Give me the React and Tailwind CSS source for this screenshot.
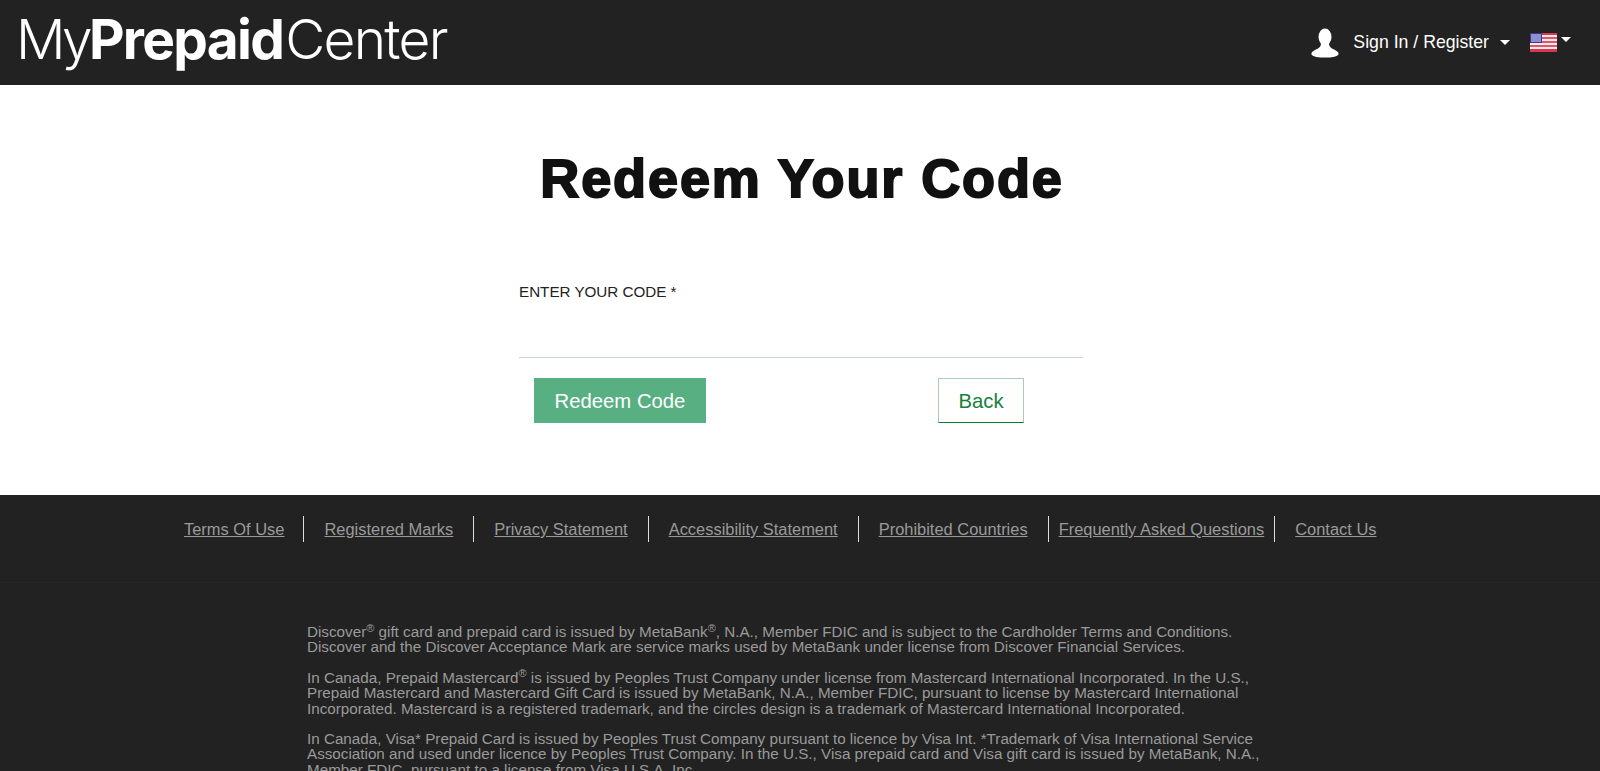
const LINKS = [
  { label: "Terms Of Use", cls: "pr-[19px] border-r" },
  { label: "Registered Marks", cls: "px-[20px] border-r" },
  { label: "Privacy Statement", cls: "px-[20px] border-r" },
  { label: "Accessibility Statement", cls: "px-[20px] border-r" },
  { label: "Prohibited Countries", cls: "px-[20px] border-r" },
  { label: "Frequently Asked Questions", cls: "px-[10px] border-r" },
  { label: "Contact Us", cls: "pl-[20px]" },
]

function UserIcon() {
  return (
    <svg width="28" height="30" viewBox="0 0 28 30" fill="#fff" className="blur-[0.4px]">
      <ellipse cx="14" cy="9" rx="6.5" ry="8.5" />
      <path d="M10 15 C10 19 8 20 4 22 C1 23.5 0 25 0.5 26.5 C2 29 8 29.5 14 29.5 C20 29.5 26 29 27.5 26.5 C28 25 27 23.5 24 22 C20 20 18 19 18 15 Z" />
    </svg>
  )
}

function FlagIcon() {
  return (
    <svg width="27" height="19" viewBox="0 0 27 19" className="block">
      <rect width="27" height="19" fill="#f0e8ec" />
      <rect y="0" width="27" height="2" fill="#d8394f" />
      <rect y="4" width="27" height="2" fill="#e2566a" />
      <rect y="8" width="27" height="2" fill="#e2566a" />
      <rect y="12" width="27" height="2" fill="#e2566a" />
      <rect y="16" width="27" height="3" fill="#d8394f" />
      <rect x="0.5" y="0.5" width="11" height="9" fill="#8f8fcf" stroke="#3c3b8e" strokeWidth="1" />
    </svg>
  )
}

function Caret() {
  return <span className="block w-0 h-0 border-x-[5.5px] border-x-transparent border-t-[5px] border-t-white" />
}

function Header() {
  return (
    <header className="h-[85px] bg-[#222222] flex items-center justify-between shrink-0">
      <div className="pl-[16px] pb-[6px] text-white text-[55px] leading-none tracking-[-1.7px] font-['Inter',sans-serif] font-light">
        <span className="tracking-[-3.7px]">My</span>
        <span className="font-bold">Prepaid</span>
        <span className="ml-[2px]">Center</span>
      </div>
      <div className="flex items-center pr-[29px] text-white text-[17.7px]">
        <UserIcon />
        <span className="ml-[14px]">Sign In / Register</span>
        <span className="ml-[11px] mb-[1px]"><Caret /></span>
        <span className="ml-[20px]"><FlagIcon /></span>
        <span className="ml-[4px] mb-[6px]"><Caret /></span>
      </div>
    </header>
  )
}

function RedeemForm() {
  return (
    <main className="h-[410px] bg-white flex flex-col items-center">
      <h1 className="mt-[62px] ml-[4px] text-[54px] leading-[62px] text-[#111111] font-bold tracking-[1.9px] [-webkit-text-stroke:2px_#111111]">
        Redeem Your Code
      </h1>
      <div className="w-[564px] ml-[2px] mt-[74px]">
        <label className="block text-[15.2px] leading-[17px] text-[#222222]">ENTER YOUR CODE *</label>
        <div className="h-[58px] border-b border-[#ced4da]" />
        <div className="flex mt-[20px] pl-[15px]">
          <button className="w-[172px] h-[45px] pt-[1px] bg-[#58b082] text-white text-[20.3px]">Redeem Code</button>
          <button className="ml-[232px] w-[86px] h-[45px] pt-[1px] bg-white border border-[#a9cdb4] border-b-[#0a7a2a] text-[#17803a] text-[20.3px]">
            Back
          </button>
        </div>
      </div>
    </main>
  )
}

function Footer() {
  return (
    <footer className="bg-[#222222] text-[#9a9a9a]">
      <div className="h-[88px] border-b border-[#262626] pt-[21px] pl-[184px]">
        <ul className="flex text-[16.45px] leading-[26px]">
          {LINKS.map((l) => (
            <li key={l.label} className={`border-[#dddddd] ${l.cls}`}>
              <a href="#" className="underline">{l.label}</a>
            </li>
          ))}
        </ul>
      </div>
      <div className="w-[960px] ml-[307px] pt-[41px] pb-[30px] text-[15.22px] leading-[15.4px] flex flex-col gap-[15px]">
        <p>
          Discover<sup className="text-[11px]">®</sup> gift card and prepaid card is issued by MetaBank<sup className="text-[11px]">®</sup>, N.A., Member FDIC and is subject to the Cardholder Terms and Conditions. Discover and the Discover Acceptance Mark are service marks used by MetaBank under license from Discover Financial Services.
        </p>
        <p>
          In Canada, Prepaid Mastercard<sup className="text-[11px]">®</sup> is issued by Peoples Trust Company under license from Mastercard International Incorporated. In the U.S., Prepaid Mastercard and Mastercard Gift Card is issued by MetaBank, N.A., Member FDIC, pursuant to license by Mastercard International Incorporated. Mastercard is a registered trademark, and the circles design is a trademark of Mastercard International Incorporated.
        </p>
        <p>
          In Canada, Visa* Prepaid Card is issued by Peoples Trust Company pursuant to licence by Visa Int. *Trademark of Visa International Service Association and used under licence by Peoples Trust Company. In the U.S., Visa prepaid card and Visa gift card is issued by MetaBank, N.A., Member FDIC, pursuant to a license from Visa U.S.A. Inc.
        </p>
      </div>
    </footer>
  )
}

export default function App() {
  return (
    <div className="min-h-screen bg-white font-['Liberation_Sans',Arial,sans-serif]">
      <Header />
      <RedeemForm />
      <Footer />
    </div>
  )
}
